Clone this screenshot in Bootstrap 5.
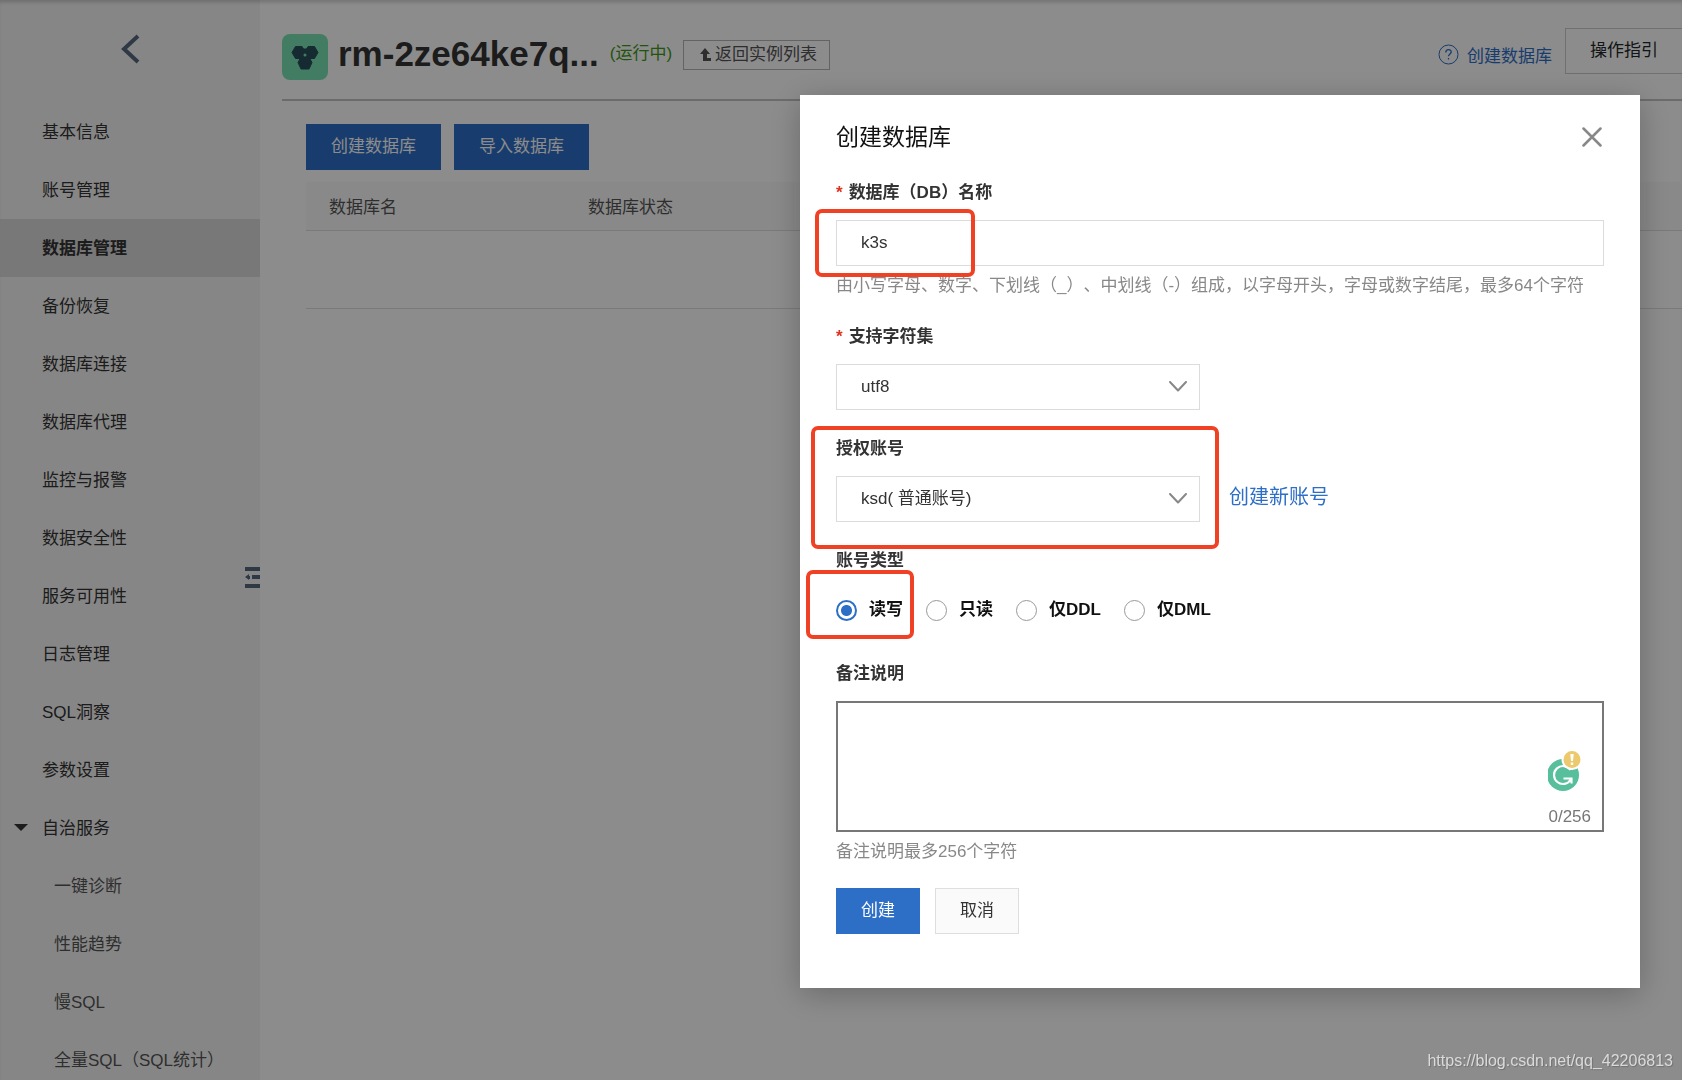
<!DOCTYPE html>
<html lang="zh-CN">
<head>
<meta charset="utf-8">
<meta name="viewport" content="width=device-width, initial-scale=1">
<title>创建数据库</title>
<link rel="stylesheet" href="https://cdn.jsdelivr.net/npm/bootstrap@5.3.0/dist/css/bootstrap.min.css">
<style>
:root { --brand: #2d6ec6; --ink: #333; --muted-ink: #888; --line: #dcdcdc; }
body { font-family: "Liberation Sans", "Noto Sans CJK SC", sans-serif; font-size: 17px; line-height: 24px; color: var(--ink); background: #fff; text-spacing-trim: space-all; }
a { color: var(--brand); text-decoration: none; }
.console { height: 100vh; overflow: hidden; box-shadow: inset 0 4px 4px -2px rgba(0,0,0,.2); }
.side-nav { width: 260px; background: rgba(0,0,0,.04); }
.side-back { height: 103px; padding: 34px 0 0 120px; }
.side-nav .nav-link { height: 58px; padding: 18px 0 0 42px; color: var(--ink); }
.side-nav .nav-link.active { background: #dadada; font-weight: 700; }
.side-nav .nav-link.sub { padding-left: 54px; color: #555; }
.side-nav .caret { left: 14px; top: 25px; }
.side-fold { right: 0; top: 567px; }
.main-area { min-width: 0; }
.page-head { margin-left: 22px; height: 101px; padding-top: 28px; border-bottom: 2px solid #c4c4c4; }
.inst-logo { margin-top: 6px; }
.page-title { font-size: 35px; line-height: 52px; font-weight: 700; margin: 0 11px 0 10px; }
.run-state { color: #3f9a1a; padding-top: 14px; }
.btn { --bs-btn-border-radius: 0; --bs-btn-font-size: 17px; --bs-btn-line-height: 24px; --bs-btn-padding-y: 10px; --bs-btn-padding-x: 24px; }
.btn-brand { --bs-btn-bg: var(--brand); --bs-btn-color: #fff; --bs-btn-border-width: 0; --bs-btn-padding-y: 11px; --bs-btn-padding-x: 25px; --bs-btn-hover-bg: #245bb0; --bs-btn-hover-color: #fff; }
.btn-plain { --bs-btn-bg: #fafafa; --bs-btn-color: #333; --bs-btn-border-color: #dedede; --bs-btn-hover-bg: #f0f0f0; }
.btn-return { --bs-btn-padding-y: 2px; --bs-btn-padding-x: 12px; --bs-btn-border-color: #b4b4b4; --bs-btn-color: #555; margin: 12px 0 0 11px; }
.btn-guide { --bs-btn-border-color: #ccc; border-right: 0; --bs-btn-bg: #fff; margin-left: 13px; }
.work-area { padding: 23px 0 0 46px; }
.work-actions { gap: 13px; }
.db-table { margin-top: 12px; }
.db-table th { width: 259px; height: 48px; padding: 10px 23px; background: #fafafa; font-weight: 400; color: #555; border-color: #dedede; }
.db-table td { height: 78px; border-color: #dedede; }
.dim { --bs-backdrop-opacity: .45; }
.create-wrap { padding: 95px 42px 0 0; }
.create-wrap .modal-content { width: 840px; max-width: 100%; padding: 25px 36px 54px; border: 0; border-radius: 0; box-shadow: 0 6px 30px rgba(0,0,0,.25); color: var(--ink); }
.dlg-head { margin-bottom: 27px; }
.dlg-title { font-size: 23px; line-height: 34px; font-weight: 400; color: #111; margin: 0; }
.close-x { padding: 0; border: 0; background: none; width: 24px; height: 24px; display: flex; align-items: center; justify-content: center; }
.field-name { display: block; font-weight: 700; margin-bottom: 15px; }
.field-group { margin-top: 27px; }
.req::before { content: "*"; color: #e0301e; margin-right: 6px; }
.form-control, .form-select { height: 46px; font-size: 17px; line-height: 24px; border-radius: 0; border-color: var(--line); color: var(--ink); padding: 10px 24px; }
.form-select { width: 364px; max-width: 100%; background-size: 18px 12px; background-position: right 12px center; background-image: url("data:image/svg+xml,%3csvg xmlns='http://www.w3.org/2000/svg' viewBox='0 0 18 12'%3e%3cpath fill='none' stroke='%23888' stroke-width='2' stroke-linecap='round' stroke-linejoin='round' d='M1 1l8 8.500L17 1'/%3e%3c/svg%3e"); }
.hint { color: var(--muted-ink); }
.new-acct { font-size: 20px; margin-left: 29px; padding-bottom: 4px; }
.kind-row { gap: 23px; margin-top: 25px; font-weight: 700; color: #111; }
.kind-row label { display: flex; align-items: center; gap: 12px; }
.kind-row .form-check-input { width: 21px; height: 21px; margin: 0; border-color: #999; }
.kind-row .form-check-input:checked { background-color: #fff; border: 2px solid var(--brand); background-image: radial-gradient(circle, var(--brand) 5px, transparent 6px); }
textarea.form-control { height: 131px; border: 2px solid #777; resize: none; }
.note-tools { right: 13px; bottom: 3px; gap: 14px; color: #777; }
.dlg-actions { gap: 15px; }
.mark-box { border: 4px solid #f04124; border-radius: 7px; pointer-events: none; }
.mark-name { left: -21px; top: -11px; width: 160px; height: 68px; }
.mark-acct { left: -25px; top: -11px; width: 408px; height: 123px; }
.mark-kind { left: -30px; top: -28px; width: 108px; height: 69px; }
.site-mark { right: 9px; bottom: 7px; z-index: 1060; font-size: 16px; color: #dadada; text-shadow: 1px 1px 1px rgba(0,0,0,.2); }
</style>
<script src="https://cdn.jsdelivr.net/npm/bootstrap@5.3.0/dist/js/bootstrap.bundle.min.js"></script>
</head>
<body class="overflow-hidden">
<div class="console d-flex">
  <aside class="side-nav position-relative flex-shrink-0">
    <div class="side-back"><a href="#" aria-label="返回"><svg width="20" height="30" viewBox="0 0 20 30" fill="none" stroke="#576980" stroke-width="4"><path d="M18 2L4 15l14 13"/></svg></a></div>
    <nav class="nav flex-column">
      <a class="nav-link" href="#">基本信息</a>
      <a class="nav-link" href="#">账号管理</a>
      <a class="nav-link active" href="#">数据库管理</a>
      <a class="nav-link" href="#">备份恢复</a>
      <a class="nav-link" href="#">数据库连接</a>
      <a class="nav-link" href="#">数据库代理</a>
      <a class="nav-link" href="#">监控与报警</a>
      <a class="nav-link" href="#">数据安全性</a>
      <a class="nav-link" href="#">服务可用性</a>
      <a class="nav-link" href="#">日志管理</a>
      <a class="nav-link" href="#">SQL洞察</a>
      <a class="nav-link" href="#">参数设置</a>
      <a class="nav-link position-relative" href="#"><svg class="caret position-absolute" width="14" height="8" viewBox="0 0 14 8"><path d="M0 0h14L7 7z" fill="#333"/></svg>自治服务</a>
      <a class="nav-link sub" href="#">一键诊断</a>
      <a class="nav-link sub" href="#">性能趋势</a>
      <a class="nav-link sub" href="#">慢SQL</a>
      <a class="nav-link sub" href="#">全量SQL（SQL统计）</a>
    </nav>
    <svg class="side-fold position-absolute" width="15" height="21" viewBox="0 0 15 21" fill="#576980"><path d="M0 0h15v4H0zM7 8h8v4H7zM0 17h15v4H0zM0 10l4-3v2h1v3H4v1z"/></svg>
  </aside>
  <main class="main-area flex-grow-1">
    <header class="page-head d-flex">
      <svg class="inst-logo flex-shrink-0" width="46" height="46" viewBox="0 0 46 46"><rect width="46" height="46" rx="8" fill="#79e3b4"/><g fill="#284f5a" stroke="#284f5a" stroke-linejoin="round"><path d="M13.500 12.500h6.500l3.500 6-3.500 6h-6.500l-3.500-6zM26 12.500h6.500l3.500 6-3.500 6H26l-3.500-6zM19.500 22h7l3.500 6.500-3 6.500h-8l-3-6.500zM19 15h8v11h-8z"/></g><circle cx="23" cy="21" r="1.500" fill="#79e3b4"/></svg>
      <h1 class="page-title text-nowrap">rm-2ze64ke7q...</h1>
      <div class="d-flex align-items-start text-nowrap">
        <span class="run-state">(运行中)</span>
        <button type="button" class="btn btn-return d-flex align-items-center"><svg class="me-1 ms-1" width="11" height="14" viewBox="0 0 11 14" fill="#555"><path d="M5 0l5 6H7v4h4v3H3V6H0z"/></svg>返回实例列表</button>
      </div>
      <div class="d-flex align-items-start ms-auto text-nowrap">
        <a href="#" class="d-flex align-items-center mt-3 mb-1"><svg class="me-2 mb-1" width="21" height="21" viewBox="0 0 21 21" fill="none" stroke="#2d6ec6"><circle cx="10.500" cy="10.500" r="9.500"/><path d="M7.800 8.500c0-4 5.600-3.600 5.400-.4-.1 1.700-2.700 2-2.700 4.100M10.500 14v1.600" stroke-width="1.300"/></svg>创建数据库</a>
        <button type="button" class="btn btn-guide">操作指引</button>
      </div>
    </header>
    <section class="work-area">
      <div class="work-actions d-flex">
        <button type="button" class="btn btn-brand">创建数据库</button>
        <button type="button" class="btn btn-brand">导入数据库</button>
      </div>
      <table class="table db-table mb-0">
        <thead><tr><th scope="col">数据库名</th><th scope="col">数据库状态</th><th scope="col" class="w-auto"></th></tr></thead>
        <tbody><tr><td colspan="3"></td></tr></tbody>
      </table>
    </section>
  </main>
</div>

<div class="modal-backdrop show dim"></div>
<div class="modal d-block" tabindex="-1" role="dialog" aria-labelledby="dlgTitle">
  <div class="create-wrap d-flex justify-content-end">
    <form class="modal-content">
      <div class="dlg-head d-flex justify-content-between align-items-center">
        <h2 class="dlg-title" id="dlgTitle">创建数据库</h2>
        <button type="button" class="close-x" aria-label="关闭"><svg width="20" height="20" viewBox="0 0 20 20" stroke="#888" stroke-width="2.500" stroke-linecap="round"><path d="M1.500 1.500l17 17M18.500 1.500l-17 17"/></svg></button>
      </div>

      <label class="field-name req" for="dbName">数据库（DB）名称</label>
      <div class="position-relative">
        <input class="form-control" id="dbName" type="text" value="k3s">
        <div class="mark-box mark-name position-absolute"></div>
      </div>
      <div class="hint mt-2">由小写字母、数字、下划线（_）、中划线（-）组成，以字母开头，字母或数字结尾，最多64个字符</div>

      <div class="field-group">
        <label class="field-name req" for="charset">支持字符集</label>
        <select class="form-select" id="charset"><option>utf8</option></select>
      </div>

      <div class="field-group position-relative">
        <label class="field-name" for="account">授权账号</label>
        <div class="d-flex align-items-center">
          <select class="form-select" id="account"><option>ksd( 普通账号)</option></select>
          <a href="#" class="new-acct text-nowrap">创建新账号</a>
        </div>
        <div class="mark-box mark-acct position-absolute"></div>
      </div>

      <div class="field-group">
        <div class="fw-bold" id="kindName">账号类型</div>
        <div class="kind-row position-relative d-flex flex-wrap" role="radiogroup" aria-labelledby="kindName">
          <label><input class="form-check-input" type="radio" name="kind" checked>读写</label>
          <label><input class="form-check-input" type="radio" name="kind">只读</label>
          <label><input class="form-check-input" type="radio" name="kind">仅DDL</label>
          <label><input class="form-check-input" type="radio" name="kind">仅DML</label>
          <div class="mark-box mark-kind position-absolute"></div>
        </div>
      </div>

      <label class="field-name mt-4 pt-3" for="note">备注说明</label>
      <div class="position-relative">
        <textarea class="form-control" id="note" maxlength="256"></textarea>
        <div class="note-tools position-absolute d-flex flex-column align-items-start">
          <svg width="38" height="41" viewBox="2 0 38 41"><circle cx="17" cy="25" r="16" fill="#57bf9c"/><path d="M24.500 20a9 9 0 1 0 .3 9.500M17.500 28.500h8v5" fill="none" stroke="#fff" stroke-width="2.200"/><circle cx="26" cy="9.500" r="9.500" fill="#ebc96c" stroke="#fff" stroke-width="2"/><path d="M24.300 4h3.400l-.7 7h-2zM24.800 12.500h2.400v2.500h-2.400z" fill="#fff"/></svg>
          <span>0/256</span>
        </div>
      </div>
      <div class="hint mt-2 mb-4">备注说明最多256个字符</div>

      <div class="dlg-actions d-flex">
        <button type="submit" class="btn btn-brand">创建</button>
        <button type="button" class="btn btn-plain">取消</button>
      </div>
    </form>
  </div>
</div>
<div class="site-mark position-fixed">https://blog.csdn.net/qq_42206813</div>
</body>
</html>
